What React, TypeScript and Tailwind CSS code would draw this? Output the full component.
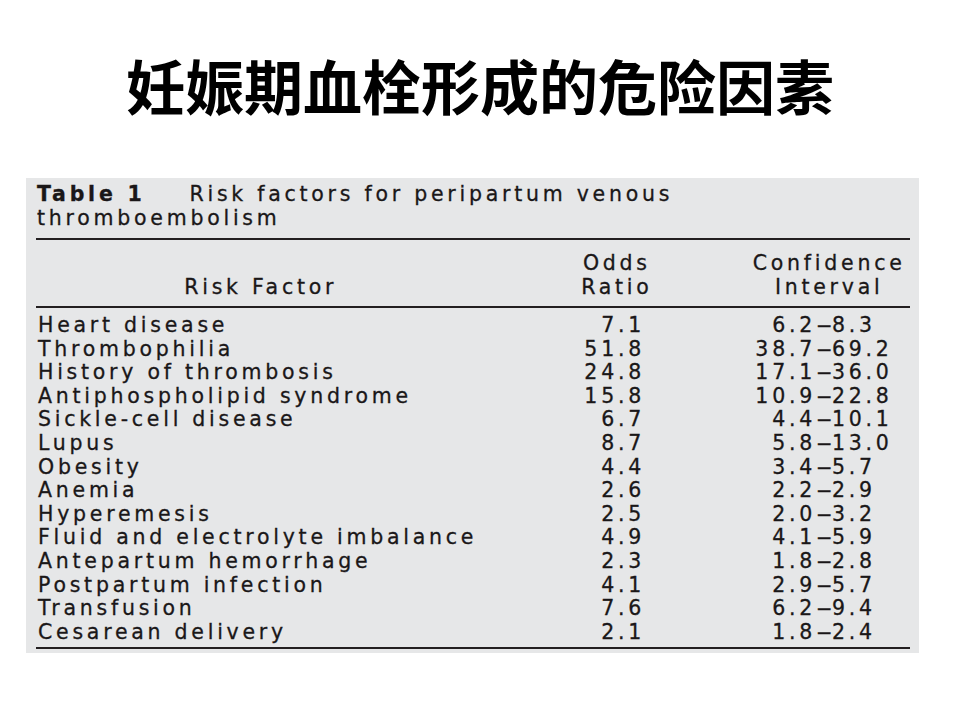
import React from "react";

const rows: [string, string, string, string][] = [
  ["Heart disease", "7.1", "6.2", "8.3"],
  ["Thrombophilia", "51.8", "38.7", "69.2"],
  ["History of thrombosis", "24.8", "17.1", "36.0"],
  ["Antiphospholipid syndrome", "15.8", "10.9", "22.8"],
  ["Sickle-cell disease", "6.7", "4.4", "10.1"],
  ["Lupus", "8.7", "5.8", "13.0"],
  ["Obesity", "4.4", "3.4", "5.7"],
  ["Anemia", "2.6", "2.2", "2.9"],
  ["Hyperemesis", "2.5", "2.0", "3.2"],
  ["Fluid and electrolyte imbalance", "4.9", "4.1", "5.9"],
  ["Antepartum hemorrhage", "2.3", "1.8", "2.8"],
  ["Postpartum infection", "4.1", "2.9", "5.7"],
  ["Transfusion", "7.6", "6.2", "9.4"],
  ["Cesarean delivery", "2.1", "1.8", "2.4"],
];

export default function App() {
  return (
    <div className="w-[960px] h-[720px] bg-white overflow-hidden">
      <div
        className="pt-[49px] text-center text-[59px] leading-[72px] font-bold text-black"
        style={{ fontFamily: '"Noto Sans CJK SC", sans-serif' }}
      >
        妊娠期血栓形成的危险因素
      </div>
      <div
        className="mt-[57px] ml-[26px] w-[893px] h-[475px] bg-[#e6e7e8] pl-[10px] pr-[9px] pt-[4px] text-[20.5px] tracking-[3.75px] text-[#1a1718] [-webkit-text-stroke:0.3px_#1a1718]"
        style={{ fontFamily: '"DejaVu Sans", sans-serif' }}
      >
        <div className="pl-[1px] leading-[24px] whitespace-nowrap">
          <span className="font-bold">Table 1</span>
          <span className="ml-[44px]">Risk factors for peripartum venous</span>
          <br />
          <span>thromboembolism</span>
        </div>
        <div className="mt-[8px] h-[2px] bg-[#231f20]" />
        <div className="mt-[11px] flex leading-[24px] whitespace-nowrap">
          <div className="w-[453px] flex flex-col justify-end items-center">
            <span>Risk Factor</span>
          </div>
          <div className="w-[265px] flex flex-col items-center">
            <span>Odds</span>
            <span>Ratio</span>
          </div>
          <div className="w-[163px] flex flex-col items-center">
            <span>Confidence</span>
            <span>Interval</span>
          </div>
        </div>
        <div className="mt-[7px] h-[2px] bg-[#231f20]" />
        <div className="mt-[6px] flex flex-col">
          {rows.map(([name, or, lo, hi]) => (
            <div key={name} className="flex h-[23.6px] leading-[23.6px] whitespace-nowrap">
              <div className="w-[524px] pl-[2px]">{name}</div>
              <div className="w-[85px] text-right">{or}</div>
              <div className="w-[171px] text-right">{lo}</div>
              <div className="w-[16px] flex justify-center tracking-normal">
                <span className="inline-block scale-x-150">–</span>
              </div>
              <div className="text-left">{hi}</div>
            </div>
          ))}
        </div>
        <div className="mt-[3px] h-[2px] bg-[#231f20]" />
      </div>
    </div>
  );
}
